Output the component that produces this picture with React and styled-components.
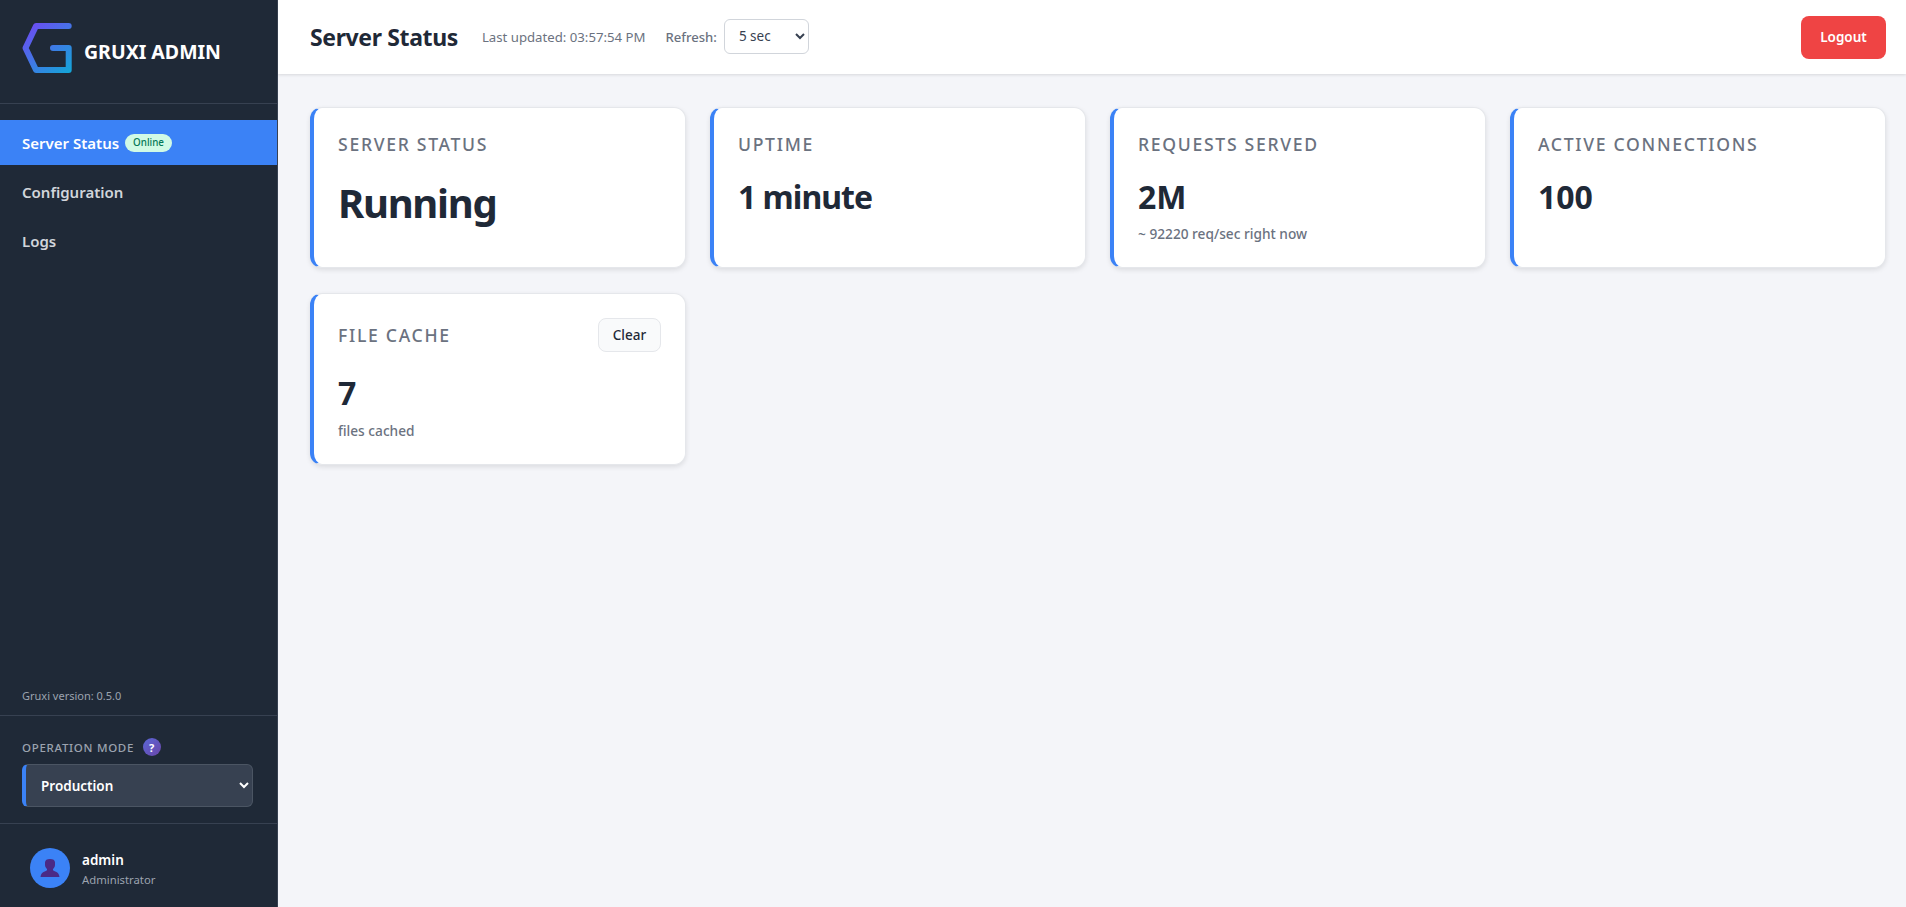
import React from 'react';
import styled, { createGlobalStyle } from 'styled-components';

const GlobalStyle = createGlobalStyle`
  * { box-sizing: border-box; }
  html, body { margin: 0; padding: 0; height: 100%; }
  body {
    font-family: "Noto Sans", "Open Sans", sans-serif;
    background: #f4f5f9;
    color: #1f2937;
  }
`;

const Logo = () => (
  <LogoSvg viewBox="0 0 52 52" fill="none">
    <defs>
      <linearGradient id="logoGrad" x1="8" y1="2" x2="48" y2="50" gradientUnits="userSpaceOnUse">
        <stop offset="0" stopColor="#6d4bf2" />
        <stop offset="1" stopColor="#14a5d8" />
      </linearGradient>
    </defs>
    <path
      d="M46.700 4H14L3.500 26L14 48H46.700V26H31"
      stroke="url(#logoGrad)"
      strokeWidth="6"
      strokeLinecap="round"
      strokeLinejoin="round"
    />
  </LogoSvg>
);

const Bust = () => (
  <BustSvg viewBox="0 0 20 20">
    <path
      d="M5 4.500C5 2 7 1 10 1S15 2 15 4.500V7C15 8.800 14 10.200 13 11V12C13 12.600 15 13.200 16.500 14C18 14.800 19.200 16.500 19.500 19H.5C.8 16.500 2 14.800 3.500 14C5 13.200 7 12.600 7 12V11C6 10.200 5 8.800 5 7Z"
      fill="#4a2a86"
    />
  </BustSvg>
);

const STATS = [
  { title: 'Server Status', value: 'Running', big: true, tight: true },
  { title: 'Uptime', value: '1 minute', tight: true },
  { title: 'Requests Served', value: '2M', note: '~ 92220 req/sec right now' },
  { title: 'Active Connections', value: '100' },
];

export default function App() {
  return (
    <>
      <GlobalStyle />
      <Layout>
        <Sidebar>
          <Brand>
            <Logo />
            <BrandName>GRUXI ADMIN</BrandName>
          </Brand>
          <Nav>
            <NavItem $active>
              Server Status <OnlineBadge>Online</OnlineBadge>
            </NavItem>
            <NavItem>Configuration</NavItem>
            <NavItem>Logs</NavItem>
          </Nav>
          <Version>Gruxi version: 0.5.0</Version>
          <ModeBox>
            <ModeLabel>
              OPERATION MODE <HelpDot>?</HelpDot>
            </ModeLabel>
            <ModeSelect defaultValue="Production">
              <option>Production</option>
              <option>Development</option>
            </ModeSelect>
          </ModeBox>
          <UserBox>
            <Avatar>
              <Bust />
            </Avatar>
            <UserText>
              <UserName>admin</UserName>
              <UserRole>Administrator</UserRole>
            </UserText>
          </UserBox>
        </Sidebar>
        <Main>
          <Header>
            <PageTitle>Server Status</PageTitle>
            <Updated>Last updated: 03:57:54 PM</Updated>
            <RefreshLabel>Refresh:</RefreshLabel>
            <RefreshSelect defaultValue="5 sec">
              <option>1 sec</option>
              <option>5 sec</option>
              <option>10 sec</option>
            </RefreshSelect>
            <Logout>Logout</Logout>
          </Header>
          <CardGrid>
            {STATS.map((s) => (
              <Card key={s.title}>
                <CardTitle>{s.title}</CardTitle>
                <CardValue $big={s.big} $tight={s.tight}>
                  {s.value}
                </CardValue>
                {s.note && <CardNote>{s.note}</CardNote>}
              </Card>
            ))}
            <Card>
              <CardHead>
                <CardTitle $flush>File Cache</CardTitle>
                <ClearButton>Clear</ClearButton>
              </CardHead>
              <CardValue>7</CardValue>
              <CardNote $gap="7px">files cached</CardNote>
            </Card>
          </CardGrid>
        </Main>
      </Layout>
    </>
  );
}

// -----------STYLED COMPONENTS---------

const Layout = styled.div`
  display: flex;
  height: 100vh;
  overflow: hidden;
`;

const Sidebar = styled.aside`
  width: 278px;
  flex-shrink: 0;
  display: flex;
  flex-direction: column;
  background: #1f2937;
  border-right: 1px solid #374151;
  color: #fff;
`;

const Brand = styled.div`
  height: 104px;
  display: flex;
  align-items: center;
  gap: 10px;
  padding: 0 22px;
  border-bottom: 1px solid #374151;
`;

const LogoSvg = styled.svg`
  width: 52px;
  height: 52px;
  margin-top: -7px;
`;

const BrandName = styled.div`
  font-size: 19.500px;
  font-weight: 700;
  white-space: nowrap;
`;

const Nav = styled.nav`
  display: flex;
  flex-direction: column;
  gap: 4px;
  padding-top: 16px;
  flex: 1;
`;

const NavItem = styled.div`
  height: 45px;
  display: flex;
  align-items: center;
  gap: 6px;
  padding: 0 22px;
  font-size: 15px;
  font-weight: 600;
  color: ${(p) => (p.$active ? '#fff' : '#d1d5db')};
  background: ${(p) => (p.$active ? '#3b82f6' : 'transparent')};
`;

const OnlineBadge = styled.span`
  height: 18px;
  padding: 0 8px;
  display: inline-flex;
  align-items: center;
  border-radius: 9px;
  background: #d1fae5;
  color: #047857;
  font-size: 9.800px;
  font-weight: 500;
`;

const Version = styled.div`
  padding: 0 22px 12px;
  font-size: 11px;
  color: #9ca3af;
`;

const ModeBox = styled.div`
  padding: 22px 24px 16px 22px;
  border-top: 1px solid #374151;
  border-bottom: 1px solid #374151;
`;

const ModeLabel = styled.div`
  display: flex;
  align-items: center;
  gap: 9px;
  margin-bottom: 8px;
  font-size: 11.500px;
  font-weight: 500;
  letter-spacing: 0.7px;
  color: #9ca3af;
`;

const HelpDot = styled.span`
  width: 18px;
  height: 18px;
  display: inline-flex;
  align-items: center;
  justify-content: center;
  border-radius: 50%;
  background: linear-gradient(135deg, #5a67d8, #6b46a8);
  color: #fff;
  font-size: 11px;
  font-weight: 700;
`;

const ModeSelect = styled.select`
  display: block;
  width: 100%;
  height: 43px;
  padding: 0 4px 0 11px;
  background: #374151;
  color: #fff;
  border: 1px solid #4b5563;
  border-left: 4px solid #3b82f6;
  border-radius: 6px;
  font-family: inherit;
  font-size: 13.500px;
  font-weight: 600;
`;

const UserBox = styled.div`
  height: 83px;
  display: flex;
  align-items: center;
  gap: 12px;
  padding: 5px 30px 0;
`;

const Avatar = styled.div`
  width: 40px;
  height: 40px;
  display: flex;
  align-items: center;
  justify-content: center;
  border-radius: 50%;
  background: #3b82f6;
`;

const BustSvg = styled.svg`
  width: 20px;
  height: 20px;
`;

const UserText = styled.div`
  padding-top: 4px;
`;

const UserName = styled.div`
  font-size: 13.500px;
  font-weight: 600;
  color: #fff;
  line-height: 19px;
`;

const UserRole = styled.div`
  font-size: 11.300px;
  color: #9ca3af;
  line-height: 19px;
`;

const Main = styled.main`
  flex: 1;
  min-width: 0;
  display: flex;
  flex-direction: column;
`;

const Header = styled.header`
  height: 74px;
  flex-shrink: 0;
  display: flex;
  align-items: center;
  padding: 0 20px 0 32px;
  background: #fff;
  box-shadow: 0 1px 3px rgba(0, 0, 0, 0.12);
`;

const PageTitle = styled.h1`
  margin: 0 24px 0 0;
  font-size: 23px;
  font-weight: 700;
  letter-spacing: -0.37px;
  color: #1f2937;
`;

const Updated = styled.span`
  margin-right: 20px;
  font-size: 13.200px;
  color: #6b7280;
`;

const RefreshLabel = styled.span`
  margin-right: 7px;
  font-size: 13.100px;
  font-weight: 500;
  color: #6b7280;
`;

const RefreshSelect = styled.select`
  width: 85px;
  height: 35px;
  margin-top: -2px;
  padding: 0 0 0 10px;
  background: #fff;
  color: #374151;
  border: 1px solid #d1d5db;
  border-radius: 6px;
  font-family: inherit;
  font-size: 13.500px;
`;

const Logout = styled.button`
  margin-left: auto;
  width: 85px;
  height: 43px;
  border: 0;
  border-radius: 8px;
  background: #ef4444;
  color: #fff;
  font-family: inherit;
  font-size: 13.500px;
  font-weight: 600;
`;

const CardGrid = styled.div`
  display: grid;
  grid-template-columns: repeat(4, minmax(0, 1fr));
  align-items: start;
  gap: 25px 24px;
  padding: 33px 20px 0 32px;
`;

const Card = styled.section`
  min-height: 161px;
  padding: 24px;
  background: #fff;
  border: 1px solid #e5e7eb;
  border-left: 4px solid #3b82f6;
  border-radius: 12px;
  box-shadow: 0 2px 5px rgba(0, 0, 0, 0.1);
`;

const CardHead = styled.div`
  display: flex;
  align-items: center;
  justify-content: space-between;
  margin-bottom: 19px;
`;

const CardTitle = styled.h3`
  margin: 0 0 ${(p) => (p.$flush ? '0' : '19px')};
  font-size: 17.600px;
  line-height: 24px;
  font-weight: 500;
  letter-spacing: 1.7px;
  text-transform: uppercase;
  color: #6b7280;
`;

const CardValue = styled.div`
  font-size: ${(p) => (p.$big ? '40px' : '32px')};
  font-weight: 700;
  letter-spacing: ${(p) => (p.$tight ? (p.$big ? '-1.3px' : '-1px') : '0')};
  color: #1f2937;
`;

const CardNote = styled.div`
  margin-top: ${(p) => p.$gap || '6px'};
  font-size: 13.700px;
  line-height: 19px;
  font-weight: 500;
  color: #6b7280;
`;

const ClearButton = styled.button`
  width: 63px;
  height: 34px;
  border: 1px solid #e5e7eb;
  border-radius: 8px;
  background: #f9fafb;
  color: #1f2937;
  font-family: inherit;
  font-size: 13.500px;
  font-weight: 500;
`;
